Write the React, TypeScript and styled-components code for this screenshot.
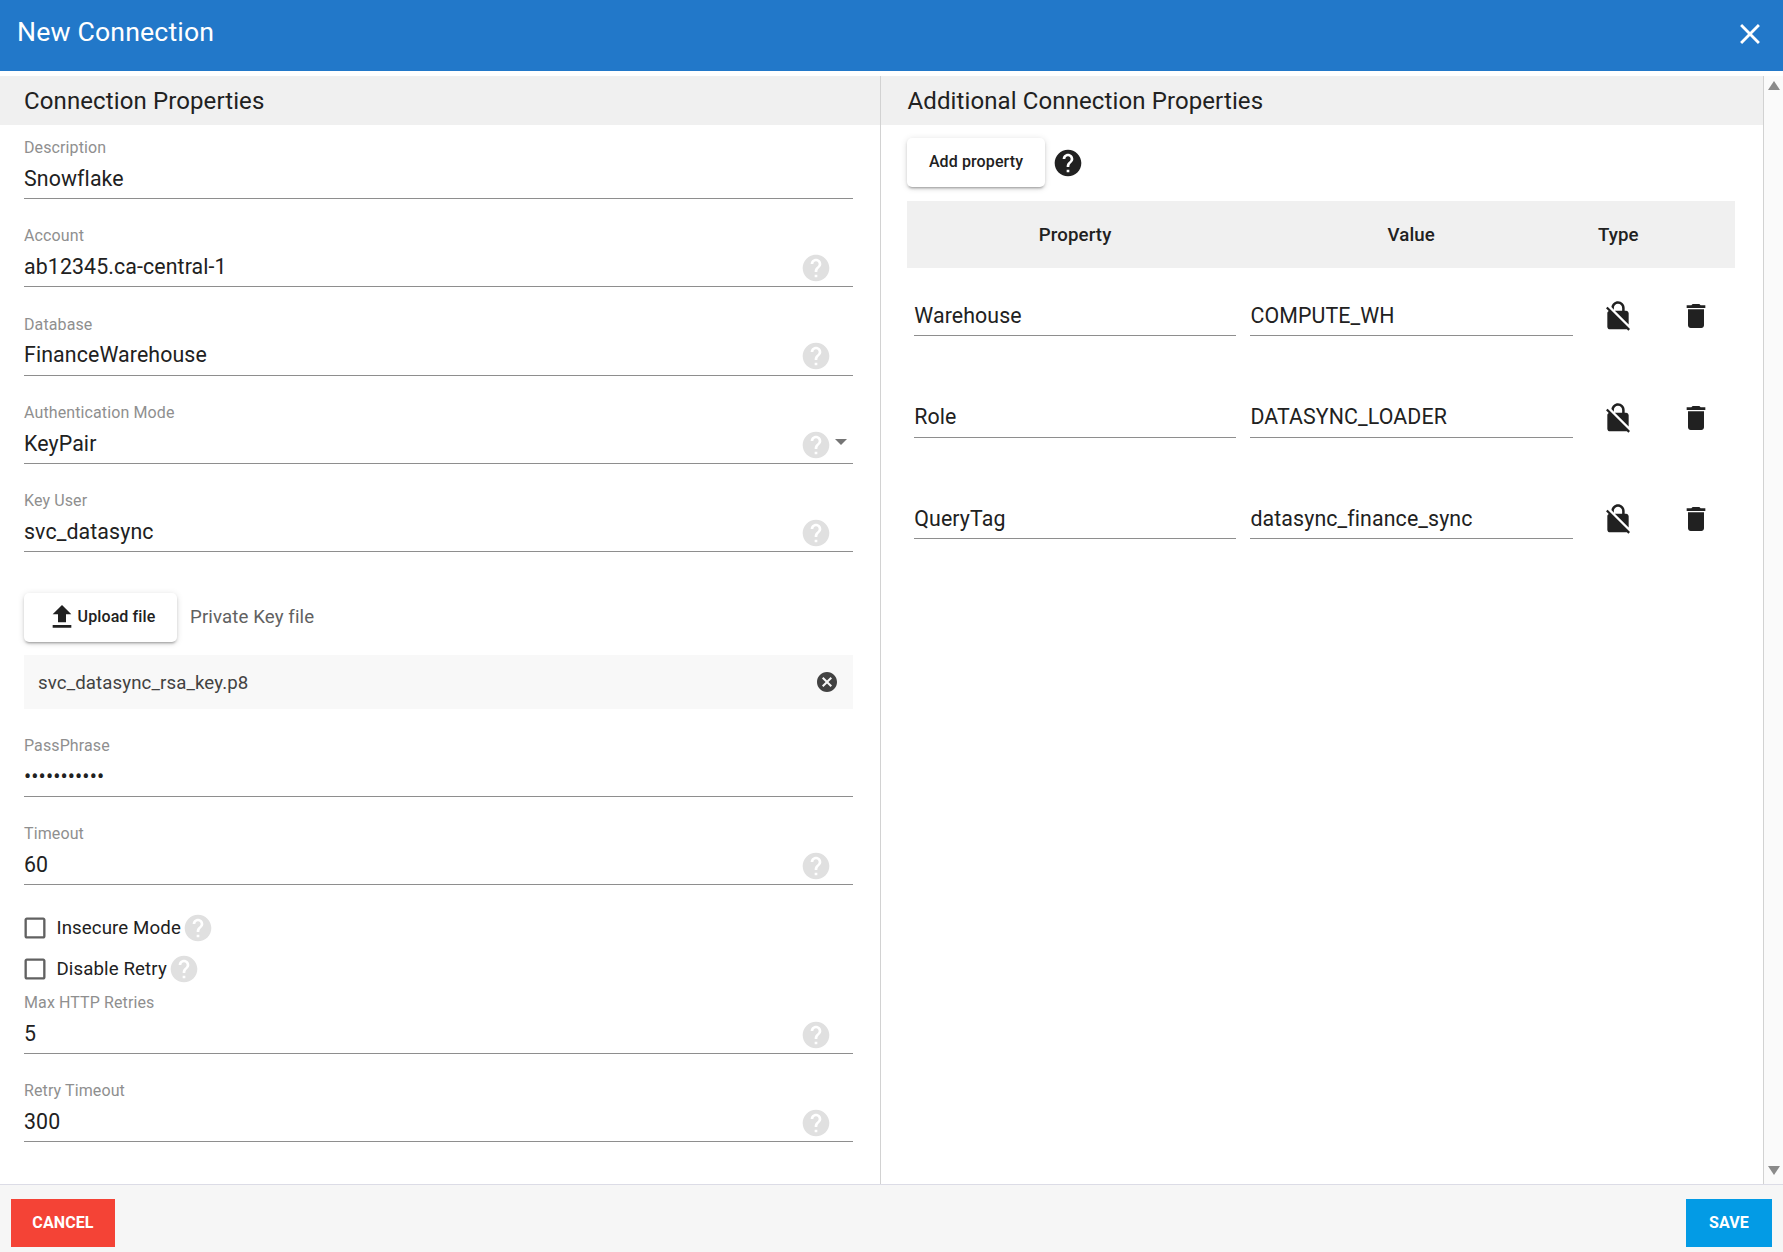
import { createGlobalStyle, styled } from "styled-components";

const GlobalStyle = createGlobalStyle`
  html, body {
    margin: 0;
    padding: 0;
    height: 100%;
    background: #fff;
  }
  body {
    font-family: Roboto, "Liberation Sans", sans-serif;
    letter-spacing: 0.11px;
    color: #212121;
  }
  * {
    box-sizing: border-box;
  }
`;

const paths = {
  close: "M19 6.41L17.59 5 12 10.59 6.41 5 5 6.41 10.59 12 5 17.59 6.41 19 12 13.41 17.59 19 19 17.59 13.41 12z",
  help: "M12 2C6.48 2 2 6.48 2 12s4.48 10 10 10 10-4.48 10-10S17.52 2 12 2zm1 17h-2v-2h2v2zm2.07-7.75l-.9.92C13.45 12.9 13 13.5 13 15h-2v-.5c0-1.1.45-2.1 1.17-2.83l1.24-1.26c.37-.36.59-.86.59-1.41 0-1.1-.9-2-2-2s-2 .9-2 2H8c0-2.21 1.79-4 4-4s4 1.79 4 4c0 .88-.36 1.68-.93 2.25z",
  upload: "M9 16h6v-6h4l-7-7-7 7h4zm-4 2h14v2H5z",
  cancel: "M12 2C6.47 2 2 6.47 2 12s4.47 10 10 10 10-4.47 10-10S17.53 2 12 2zm5 13.59L15.59 17 12 13.41 8.41 17 7 15.59 10.59 12 7 8.41 8.41 7 12 10.59 15.59 7 17 8.41 13.41 12 17 15.59z",
  noEncryption: "M21 21.78L4.22 5 3 6.22l2.04 2.04C4.42 8.6 4 9.25 4 10v10c0 1.1.9 2 2 2h12c.23 0 .45-.05.66-.12L19.78 23 21 21.78zM8.9 6c0-1.71 1.39-3.1 3.1-3.1s3.1 1.39 3.1 3.1v2H9.66L20 18.34V10c0-1.1-.9-2-2-2h-1V6c0-2.76-2.24-5-5-5-2.52 0-4.6 1.87-4.94 4.29L8.9 7.24V6z",
  trash: "M6 19c0 1.1.9 2 2 2h8c1.1 0 2-.9 2-2V7H6v12zM19 4h-3.5l-1-1h-5l-1 1H5v2h14V4z",
  checkbox: "M19 5v14H5V5h14m0-2H5c-1.1 0-2 .9-2 2v14c0 1.1.9 2 2 2h14c1.1 0 2-.9 2-2V5c0-1.1-.9-2-2-2z",
};

const Svg = styled.svg<{ $size?: number; $color?: string }>`
  width: ${(p) => p.$size ?? 32}px;
  height: ${(p) => p.$size ?? 32}px;
  flex: none;
  display: block;
  fill: ${(p) => p.$color ?? "#212121"};
`;

const Icon = (props: { name: keyof typeof paths; size?: number; color?: string }) => (
  <Svg viewBox="0 0 24 24" $size={props.size} $color={props.color}>
    <path d={paths[props.name]} />
  </Svg>
);

const Page = styled.div`
  height: 1252px;
  display: flex;
  flex-direction: column;
  overflow: hidden;
`;

const Header = styled.header`
  flex: none;
  height: 71px;
  margin-bottom: 5px;
  padding: 0 16px 7px 17px;
  display: flex;
  align-items: center;
  justify-content: space-between;
  background: #2278c9;
  color: #fff;
`;

const Title = styled.h1`
  margin: 0;
  font-size: 26.67px;
  font-weight: 400;
  letter-spacing: 0.16px;
`;

const CloseButton = styled.span`
  display: flex;
  margin-top: 4px;
`;

const Body = styled.div`
  flex: 1;
  min-height: 0;
  display: flex;
`;

const LeftPanel = styled.section`
  flex: 0 0 881px;
  border-right: 1px solid #d2d2d2;
`;

const RightPanel = styled.section`
  flex: 1;
  min-width: 0;
`;

const SectionTitle = styled.h2<{ $inset: number }>`
  margin: 0;
  height: 49px;
  padding-left: ${(p) => p.$inset}px;
  display: flex;
  align-items: center;
  background: #f0f0f0;
  font-size: 24px;
  font-weight: 400;
`;

const Form = styled.div`
  padding: 12px 27px 0 24px;
  display: flex;
  flex-direction: column;
`;

const FieldWrap = styled.div<{ $gap?: number }>`
  margin-bottom: ${(p) => p.$gap ?? 26.33}px;
`;

const FieldLabel = styled.div`
  height: 22.67px;
  line-height: 22px;
  font-size: 16px;
  color: #8f8f8f;
`;

const InputRow = styled.div`
  height: 39.33px;
  display: flex;
  align-items: center;
  border-bottom: 1.33px solid #8e8e8e;
`;

const InputValue = styled.span`
  flex: 1;
  font-size: 21.33px;
  line-height: 38px;
  white-space: nowrap;
`;

const Dots = styled(InputValue)`
  letter-spacing: 0.1px;
`;

const HelpSlot = styled.span`
  display: flex;
  margin-top: 2px;
`;

const TrailSlot = styled.span`
  flex: 0 0 21px;
  padding-left: 2.5px;
`;

const SelectArrow = styled.span`
  display: block;
  width: 0;
  height: 0;
  margin-bottom: 3px;
  border-left: 6.2px solid transparent;
  border-right: 6.2px solid transparent;
  border-top: 6px solid #757575;
`;

const UploadRow = styled.div`
  display: flex;
  align-items: center;
  gap: 13px;
  margin: 14.33px 0 13px;
`;

const RaisedButton = styled.button<{ $width: number }>`
  width: ${(p) => p.$width}px;
  height: 49px;
  padding: 0;
  display: flex;
  align-items: center;
  justify-content: center;
  border: 0;
  border-radius: 5px;
  background: #fff;
  color: #212121;
  font-family: inherit;
  font-size: 16px;
  font-weight: 500;
  letter-spacing: inherit;
  box-shadow: 0 3px 2px -2px rgba(0, 0, 0, 0.2), 0 2px 3px 0 rgba(0, 0, 0, 0.14), 0 1px 7px 0 rgba(0, 0, 0, 0.12);
`;

const ButtonText = styled.span`
  margin-bottom: 2px;
`;

const UploadCaption = styled.span`
  font-size: 18.67px;
  color: #616161;
`;

const FileRow = styled.div`
  height: 54px;
  margin-bottom: 26px;
  padding: 0 14px;
  display: flex;
  align-items: center;
  justify-content: space-between;
  background: #f8f8f8;
  font-size: 18.67px;
  color: #424242;
`;

const FileName = styled.span`
  margin-top: 2px;
`;

const CheckRows = styled.div`
  margin: -4.33px 0 2.83px;
`;

const CheckRow = styled.div`
  height: 41px;
  display: flex;
  align-items: center;
  font-size: 18.67px;
`;

const CheckBox = styled.span`
  display: flex;
  margin: 0 7.5px 0 -3px;
`;

const CheckHelp = styled.span`
  display: flex;
  margin-left: 1px;
`;

const TableArea = styled.div`
  padding: 13px 28px 0 26px;
`;

const AddRow = styled.div`
  display: flex;
  align-items: center;
  gap: 6.5px;
  margin-bottom: 14px;
`;

const TableHead = styled.div`
  height: 66.5px;
  padding-top: 1.5px;
  display: grid;
  grid-template-columns: 337fr 337fr 78fr 78fr;
  align-items: center;
  background: #f0f0f0;
  font-size: 18.67px;
  font-weight: 500;
  text-align: center;
`;

const TableRow = styled.div`
  height: 101.5px;
  display: grid;
  grid-template-columns: 337fr 337fr 78fr 78fr;
  align-items: start;
`;

const CellInput = styled.div`
  height: 40px;
  margin: 28.5px 6.75px 0 7.25px;
  padding-bottom: 0.67px;
  display: flex;
  align-items: center;
  border-bottom: 1.33px solid #8e8e8e;
  font-size: 21.33px;
`;

const IconCell = styled.div`
  margin-top: 32.5px;
  display: flex;
  justify-content: center;
`;

const ScrollTrack = styled.div`
  flex: 0 0 20px;
  padding: 5px 0 9px;
  display: flex;
  flex-direction: column;
  align-items: center;
  justify-content: space-between;
  background: #fafafa;
  border-left: 1px solid #d2d2d2;
`;

const ScrollArrow = styled.span<{ $down?: boolean }>`
  width: 0;
  height: 0;
  border-left: 6px solid transparent;
  border-right: 6px solid transparent;
  ${(p) => (p.$down ? "border-top: 9px solid #8a8a8a;" : "border-bottom: 9px solid #8a8a8a;")}
`;

const Footer = styled.footer`
  flex: none;
  height: 68px;
  padding: 13.5px 11px 0;
  display: flex;
  justify-content: space-between;
  align-items: flex-start;
  background: #f6f6f6;
  border-top: 1.33px solid #dcdce6;
`;

const ActionButton = styled.button<{ $bg: string; $width: number }>`
  width: ${(p) => p.$width}px;
  height: 48px;
  padding: 0;
  border: 0;
  background: ${(p) => p.$bg};
  color: #fff;
  font-family: inherit;
  font-size: 16px;
  font-weight: 700;
  letter-spacing: inherit;
`;

const Field = (props: { label: string; value: string; help?: boolean; select?: boolean; gap?: number; secret?: boolean }) => (
  <FieldWrap $gap={props.gap}>
    <FieldLabel>{props.label}</FieldLabel>
    <InputRow>
      {props.secret ? <Dots>{props.value}</Dots> : <InputValue>{props.value}</InputValue>}
      {props.help && (
        <>
          <HelpSlot>
            <Icon name="help" color="#e0e0e0" />
          </HelpSlot>
          <TrailSlot>{props.select && <SelectArrow />}</TrailSlot>
        </>
      )}
    </InputRow>
  </FieldWrap>
);

const CheckField = (props: { label: string }) => (
  <CheckRow>
    <CheckBox>
      <Icon name="checkbox" size={28} color="#616161" />
    </CheckBox>
    {props.label}
    <CheckHelp>
      <Icon name="help" color="#e0e0e0" />
    </CheckHelp>
  </CheckRow>
);

const properties = [
  { name: "Warehouse", value: "COMPUTE_WH" },
  { name: "Role", value: "DATASYNC_LOADER" },
  { name: "QueryTag", value: "datasync_finance_sync" },
];

export default function App() {
  return (
    <Page>
      <GlobalStyle />
      <Header>
        <Title>New Connection</Title>
        <CloseButton>
          <Icon name="close" size={34} color="#fff" />
        </CloseButton>
      </Header>
      <Body>
        <LeftPanel>
          <SectionTitle $inset={24}>Connection Properties</SectionTitle>
          <Form>
            <Field label="Description" value="Snowflake" />
            <Field label="Account" value="ab12345.ca-central-1" help />
            <Field label="Database" value="FinanceWarehouse" help />
            <Field label="Authentication Mode" value="KeyPair" help select />
            <Field label="Key User" value="svc_datasync" help />
            <UploadRow>
              <RaisedButton $width={153}>
                <Icon name="upload" />
                <ButtonText>Upload file</ButtonText>
              </RaisedButton>
              <UploadCaption>Private Key file</UploadCaption>
            </UploadRow>
            <FileRow>
              <FileName>svc_datasync_rsa_key.p8</FileName>
              <Icon name="cancel" size={24} color="#424242" />
            </FileRow>
            <Field label="PassPhrase" value="•••••••••••" secret />
            <Field label="Timeout" value="60" help />
            <CheckRows>
              <CheckField label="Insecure Mode" />
              <CheckField label="Disable Retry" />
            </CheckRows>
            <Field label="Max HTTP Retries" value="5" help />
            <Field label="Retry Timeout" value="300" help />
          </Form>
        </LeftPanel>
        <RightPanel>
          <SectionTitle $inset={26.5}>Additional Connection Properties</SectionTitle>
          <TableArea>
            <AddRow>
              <RaisedButton $width={138}>
                <ButtonText>Add property</ButtonText>
              </RaisedButton>
              <Icon name="help" />
            </AddRow>
            <TableHead>
              <span>Property</span>
              <span>Value</span>
              <span>Type</span>
              <span />
            </TableHead>
            {properties.map((row) => (
              <TableRow key={row.name}>
                <CellInput>{row.name}</CellInput>
                <CellInput>{row.value}</CellInput>
                <IconCell>
                  <Icon name="noEncryption" />
                </IconCell>
                <IconCell>
                  <Icon name="trash" />
                </IconCell>
              </TableRow>
            ))}
          </TableArea>
        </RightPanel>
        <ScrollTrack>
          <ScrollArrow />
          <ScrollArrow $down />
        </ScrollTrack>
      </Body>
      <Footer>
        <ActionButton $bg="#f44336" $width={104}>CANCEL</ActionButton>
        <ActionButton $bg="#039be5" $width={86}>SAVE</ActionButton>
      </Footer>
    </Page>
  );
}
